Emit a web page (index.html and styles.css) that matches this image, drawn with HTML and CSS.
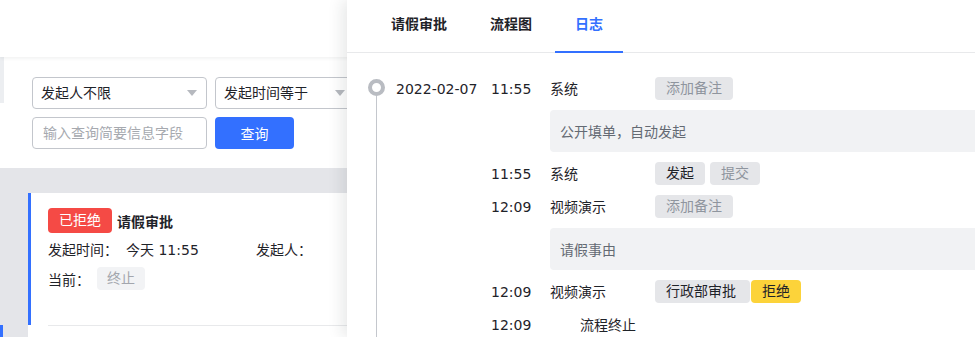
FILE: index.html
```html
<!DOCTYPE html>
<html lang="zh-CN">
<head>
<meta charset="utf-8">
<title>请假审批</title>
<link rel="stylesheet" href="styles.css">
</head>
<body>
<div class="screen">
  <div class="page">
    <div class="page-header"></div>
    <div class="page-body">
      <div class="side-strip">
        <div class="strip-a"></div>
        <div class="strip-b"></div>
        <div class="strip-c"></div>
        <div class="strip-d"></div>
      </div>
      <div class="main">
        <div class="filter-card">
          <div class="filter-row">
            <div class="select select-wide"><span>发起人不限</span><i class="caret"></i></div>
            <div class="select select-narrow"><span>发起时间等于</span><i class="caret"></i></div>
          </div>
          <div class="filter-row">
            <input class="search" type="text" placeholder="输入查询简要信息字段">
            <button class="btn-primary" type="button">查询</button>
          </div>
        </div>
        <div class="list-area">
          <div class="list-card">
            <div class="item item-active">
              <div class="item-title">
                <span class="badge-red">已拒绝</span>
                <span class="title-text">请假审批</span>
              </div>
              <div class="item-meta">
                <span class="meta-col">发起时间：<span class="meta-value">今天 11:55</span></span>
                <span>发起人：</span>
              </div>
              <div class="item-current">
                <span>当前：</span>
                <span class="tag-soft">终止</span>
              </div>
            </div>
            <div class="item-next"></div>
          </div>
        </div>
      </div>
    </div>
  </div>

  <aside class="drawer">
    <div class="drawer-tabs">
      <div class="tab">请假审批</div>
      <div class="tab">流程图</div>
      <div class="tab tab-active">日志</div>
    </div>
    <div class="timeline">
      <div class="rail">
        <div class="rail-dot"></div>
        <div class="rail-line"></div>
      </div>
      <div class="entries">
        <div class="entry">
          <span>2022-02-07</span>
          <span>11:55</span>
          <span>系统</span>
          <div class="tags"><span class="tag tag-muted">添加备注</span></div>
        </div>
        <div class="note">公开填单，自动发起</div>
        <div class="entry">
          <span></span>
          <span>11:55</span>
          <span>系统</span>
          <div class="tags"><span class="tag">发起</span><span class="tag tag-muted">提交</span></div>
        </div>
        <div class="entry">
          <span></span>
          <span>12:09</span>
          <span>视频演示</span>
          <div class="tags"><span class="tag tag-muted">添加备注</span></div>
        </div>
        <div class="note">请假事由</div>
        <div class="entry">
          <span></span>
          <span>12:09</span>
          <span>视频演示</span>
          <div class="tags tags-tight"><span class="tag tag-wide">行政部审批</span><span class="tag tag-yellow">拒绝</span></div>
        </div>
        <div class="entry">
          <span></span>
          <span>12:09</span>
          <span class="indent">流程终止</span>
          <span></span>
        </div>
      </div>
    </div>
  </aside>
</div>
</body>
</html>
```

FILE: styles.css
```css
* {
  box-sizing: border-box;
}

html, body {
  margin: 0;
  padding: 0;
  width: 975px;
  height: 337px;
  overflow: hidden;
  background: #ffffff;
}

body {
  font-family: "DejaVu Sans", "Noto Sans CJK SC", sans-serif;
  font-size: 14px;
  color: #1f2329;
}

.screen {
  display: flex;
  width: 975px;
  height: 337px;
  overflow: hidden;
}

/* ---------- background page ---------- */
.page {
  width: 347px;
  flex: 0 0 347px;
  height: 337px;
  overflow: hidden;
  display: flex;
  flex-direction: column;
  background: #e4e5e9;
}

.page-header {
  height: 57px;
  flex: 0 0 57px;
  width: 460px;
  background: #ffffff;
  box-shadow: 0 1px 4px rgba(31, 35, 41, 0.08);
  position: relative;
  z-index: 1;
}

.page-body {
  flex: 1;
  display: flex;
  width: 460px;
}

.side-strip {
  width: 4px;
  flex: 0 0 4px;
  display: flex;
  flex-direction: column;
}

.strip-a {
  height: 46px;
  background: #eceef1;
}

.strip-b {
  height: 65px;
  background: #ffffff;
}

.strip-c {
  height: 157px;
  background: #e4e5e9;
}

.strip-d {
  flex: 1;
  width: 3px;
  background: #3370ff;
}

.main {
  flex: 1;
  display: flex;
  flex-direction: column;
}

.filter-card {
  background: #ffffff;
  padding: 20px 0 19px 28px;
  display: flex;
  flex-direction: column;
  gap: 8px;
}

.filter-row {
  display: flex;
  gap: 8px;
}

.select {
  height: 32px;
  border: 1px solid #c3c6cc;
  border-radius: 4px;
  display: flex;
  align-items: center;
  justify-content: space-between;
  padding: 0 9px 0 8px;
  line-height: 20px;
  background: #ffffff;
}

.select-wide {
  width: 175px;
}

.select-narrow {
  width: 140px;
}

.caret {
  width: 0;
  height: 0;
  border-left: 5.5px solid transparent;
  border-right: 5.5px solid transparent;
  border-top: 6px solid #b6b9bf;
}

.search {
  width: 175px;
  height: 32px;
  border: 1px solid #c3c6cc;
  border-radius: 4px;
  padding: 0 10px;
  font: inherit;
  color: #1f2329;
  outline: none;
}

.search::placeholder {
  color: #a6a9af;
}

.btn-primary {
  width: 79px;
  height: 32px;
  border: none;
  border-radius: 4px;
  background: #3370ff;
  color: #ffffff;
  font: inherit;
  padding: 0;
}

.list-area {
  flex: 1;
  padding: 25px 0 0 24px;
}

.list-card {
  background: #ffffff;
  height: 100%;
}

.item-active {
  border-left: 3px solid #3370ff;
  padding: 15px 0 35px 17px;
  display: flex;
  flex-direction: column;
  gap: 6px;
}

.item-title {
  display: flex;
  align-items: center;
  height: 25px;
}

.badge-red {
  height: 25px;
  line-height: 25px;
  padding: 0 11px;
  border-radius: 4px;
  background: #f54a45;
  color: #ffffff;
}

.title-text {
  margin-left: 5px;
  font-weight: 700;
}

.item-meta {
  display: flex;
  line-height: 22px;
  height: 22px;
}

.meta-col {
  width: 208px;
}

.meta-value {
  margin-left: 8px;
}

.item-current {
  display: flex;
  align-items: center;
  height: 23px;
}

.tag-soft {
  margin-left: 7px;
  height: 23px;
  line-height: 23px;
  padding: 0 10px;
  border-radius: 4px;
  background: #f2f3f5;
  color: #a3a6ad;
}

.item-next {
  margin-left: 20px;
  border-top: 1px solid #e8e9eb;
  height: 20px;
}

/* ---------- drawer ---------- */
.drawer {
  position: relative;
  z-index: 2;
  flex: 0 0 720px;
  width: 720px;
  height: 337px;
  background: #ffffff;
  box-shadow: -5px 0 14px rgba(31, 35, 41, 0.10);
  display: flex;
  flex-direction: column;
}

.drawer-tabs {
  height: 53px;
  flex: 0 0 53px;
  border-bottom: 1px solid #e8e9eb;
  display: flex;
  padding-left: 24px;
  gap: 3px;
}

.tab {
  height: 53px;
  margin-bottom: -1px;
  padding: 0 20px 6px;
  border-bottom: 2px solid transparent;
  display: flex;
  align-items: center;
  font-weight: 700;
  color: #1f2329;
}

.tab-active {
  color: #3370ff;
  border-bottom-color: #3370ff;
}

.timeline {
  flex: 1;
  display: flex;
  padding: 24px 0 0 21px;
}

.rail {
  width: 17px;
  flex: 0 0 17px;
  display: flex;
  flex-direction: column;
  align-items: center;
}

.rail-dot {
  width: 17px;
  height: 17px;
  margin-top: 2px;
  border: 4px solid #b9bcc2;
  border-radius: 50%;
  flex: 0 0 17px;
}

.rail-line {
  flex: 1;
  width: 1px;
  background: #c4c7cd;
}

.entries {
  flex: 1;
  margin-left: 11px;
  display: flex;
  flex-direction: column;
  gap: 10px;
}

.entry {
  display: grid;
  grid-template-columns: 95px 59px 105px 1fr;
  align-items: center;
  height: 23px;
  line-height: 20px;
}

.indent {
  padding-left: 30px;
}

.tags {
  display: flex;
  gap: 5px;
}

.tags-tight {
  gap: 1px;
}

.tag {
  height: 23px;
  line-height: 23px;
  padding: 0 11px;
  border-radius: 4px;
  background: #e5e6e9;
  color: #1f2329;
}

.tag-muted {
  color: #8f959e;
}

.tag-wide {
  padding: 0 14px 0 11px;
}

.tag-yellow {
  background: #fcd33a;
}

.note {
  margin-left: 154px;
  height: 42px;
  padding: 0 10px;
  display: flex;
  align-items: center;
  background: #f1f2f4;
  border-radius: 4px 0 0 4px;
  color: #646a73;
}
```
